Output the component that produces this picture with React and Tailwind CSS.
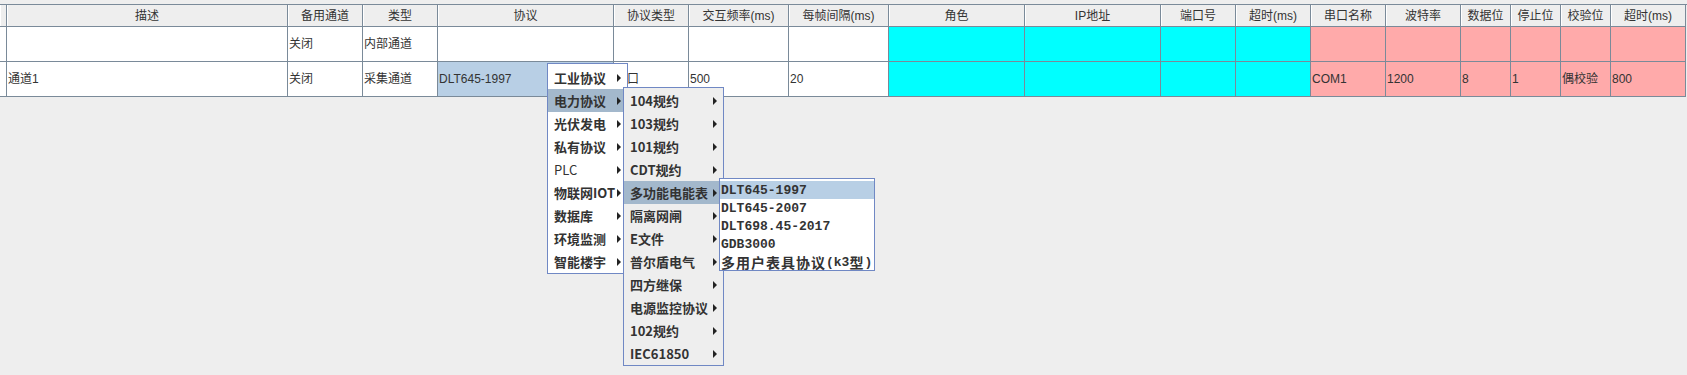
import React from "react";

const cols = [
  { w: "w-[7px]", title: "" },
  { w: "w-[281px]", title: "描述" },
  { w: "w-[75px]", title: "备用通道" },
  { w: "w-[75px]", title: "类型" },
  { w: "w-[176px]", title: "协议" },
  { w: "w-[75px]", title: "协议类型" },
  { w: "w-[100px]", title: "交互频率(ms)" },
  { w: "w-[100px]", title: "每帧间隔(ms)" },
  { w: "w-[136px]", title: "角色", bg: "bg-[#00ffff]" },
  { w: "w-[136px]", title: "IP地址", bg: "bg-[#00ffff]" },
  { w: "w-[75px]", title: "端口号", bg: "bg-[#00ffff]" },
  { w: "w-[75px]", title: "超时(ms)", bg: "bg-[#00ffff]" },
  { w: "w-[75px]", title: "串口名称", bg: "bg-[#ffaaaa]" },
  { w: "w-[75px]", title: "波特率", bg: "bg-[#ffaaaa]" },
  { w: "w-[50px]", title: "数据位", bg: "bg-[#ffaaaa]" },
  { w: "w-[50px]", title: "停止位", bg: "bg-[#ffaaaa]" },
  { w: "w-[50px]", title: "校验位", bg: "bg-[#ffaaaa]" },
  { w: "w-[75px]", title: "超时(ms)", bg: "bg-[#ffaaaa]" },
];

const rows = [
  ["", "", "关闭", "内部通道", "", "", "", "", "", "", "", "", "", "", "", "", "", ""],
  ["", "通道1", "关闭", "采集通道", "DLT645-1997", "串口", "500", "20", "", "", "", "", "COM1", "1200", "8", "1", "偶校验", "800"],
];

const menu1 = ["工业协议", "电力协议", "光伏发电", "私有协议", "PLC", "物联网IOT", "数据库", "环境监测", "智能楼宇"];
const menu2 = ["104规约", "103规约", "101规约", "CDT规约", "多功能电能表", "隔离网闸", "E文件", "普尔盾电气", "四方继保", "电源监控协议", "102规约", "IEC61850"];
const menu3 = ["DLT645-1997", "DLT645-2007", "DLT698.45-2017", "GDB3000"];

const Arrow = () => (
  <svg width="5" height="8" viewBox="0 0 5 8" className="shrink-0">
    <polygon points="0,0 4,4 0,8" fill="#222" />
  </svg>
);

const App = () => {
  return (
    <div className="relative w-[1687px] h-[375px] bg-[#eeeeee] overflow-hidden text-[12px] text-[#333] font-['Liberation_Sans','Noto_Sans_CJK_SC',sans-serif]">
      <div className="pt-[4px]">
        <div className="flex border-t border-[#7a8a99] h-[23px]">
          {cols.map((c, i) => (
            <div
              key={i}
              className={`${c.w} shrink-0 border-r border-b border-[#7a8a99] bg-[#eeeeee] shadow-[inset_1px_0_0_#ffffff] flex items-center justify-center leading-none`}
            >
              {c.title}
            </div>
          ))}
        </div>
        {rows.map((r, ri) => (
          <div key={ri} className="flex h-[35px]">
            {cols.map((c, i) => (
              <div
                key={i}
                className={`${c.w} shrink-0 border-r border-b border-[#7a8a99] flex items-center pl-[1px] whitespace-nowrap overflow-hidden ${
                  ri === 1 && i === 4 ? "bg-[#b8cfe5]" : c.bg || "bg-white"
                }`}
              >
                {r[i]}
              </div>
            ))}
          </div>
        ))}
      </div>

      {/* first level menu */}
      <div className="absolute left-[547px] top-[63px] w-[81px] h-[211px] bg-white border border-[#7088c4] pt-[2px] font-['Noto_Sans_CJK_SC',sans-serif] font-bold text-[13px] text-[#333]">
        {menu1.map((m, i) => (
          <div
            key={i}
            className={`h-[23px] flex items-center justify-between pl-[6px] pr-[5px] leading-none ${i === 1 ? "bg-[#a3b8cc]" : ""}`}
          >
            <span className={m === "PLC" ? "font-normal" : ""}>{m}</span>
            <Arrow />
          </div>
        ))}
      </div>

      {/* second level menu */}
      <div className="absolute left-[623px] top-[87px] w-[101px] h-[279px] bg-[#eeeeee] border border-[#7088c4] pt-[1px] font-['Noto_Sans_CJK_SC',sans-serif] font-bold text-[13px] text-[#333]">
        {menu2.map((m, i) => (
          <div
            key={i}
            className={`h-[23px] flex items-center justify-between pl-[6px] pr-[5px] leading-none ${i === 4 ? "bg-[#a3b8cc]" : ""}`}
          >
            <span>{m}</span>
            <Arrow />
          </div>
        ))}
      </div>

      {/* third level menu */}
      <div className="absolute left-[719px] top-[178px] w-[156px] h-[93px] bg-white border border-[#7088c4] pt-[2px] font-['Liberation_Mono','Noto_Sans_CJK_SC',monospace] font-bold text-[13px] text-[#333]">
        {menu3.map((m, i) => (
          <div
            key={i}
            className={`h-[18px] flex items-center pl-[1px] leading-none whitespace-nowrap ${i === 0 ? "bg-[#b8cfe5]" : ""}`}
          >
            {m}
          </div>
        ))}
        <div className="h-[18px] flex items-center pl-[1px] leading-none whitespace-nowrap">
          <span className="text-[14px] tracking-[1px] font-['Noto_Sans_CJK_SC',sans-serif]">多用户表具协议</span>
          <span>(k3</span>
          <span className="text-[14px] tracking-[1px] font-['Noto_Sans_CJK_SC',sans-serif]">型</span>
          <span>)</span>
        </div>
      </div>
    </div>
  );
};

export default App;
